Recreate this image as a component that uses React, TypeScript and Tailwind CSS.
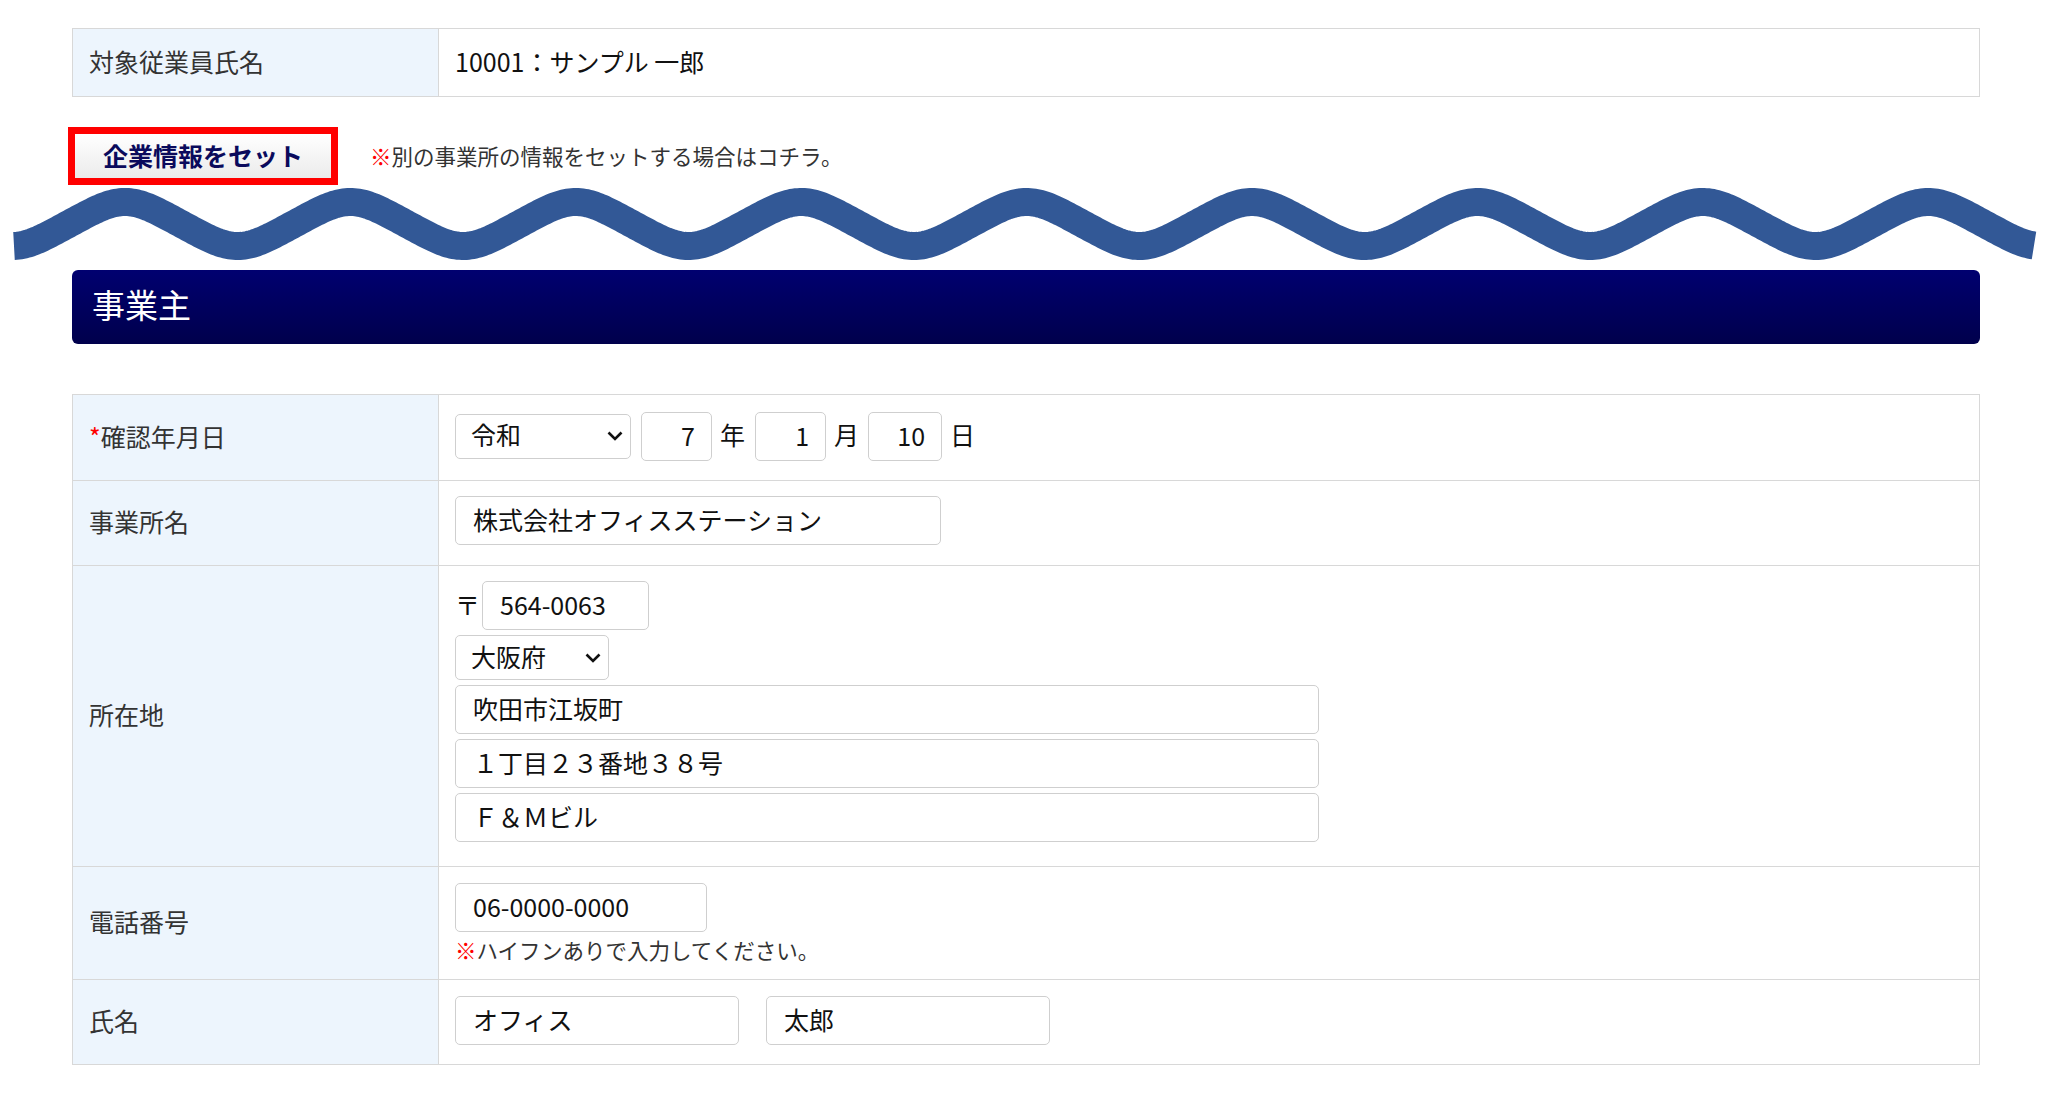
import React from 'react';

// wave divider, page coords shifted so svg top = 185
const WAVE_PATH = (() => {
  const pts: string[] = [];
  for (let x = 14; x <= 2034; x += 2) {
    const t = (2 * Math.PI * (x - 125)) / 225.4;
    const f = (Math.cos(t) + 0.03 * Math.cos(3 * t)) / 1.03;
    const y = 39 - 22 * f;
    pts.push(`${x},${y.toFixed(2)}`);
  }
  return 'M' + pts.join(' L');
})();

const Chevron = () => (
  <svg
    width="16"
    height="10"
    viewBox="0 0 16 10"
    className="pointer-events-none absolute right-[8px] top-1/2 -translate-y-1/2"
  >
    <path d="M1.5 1.5 L8 8 L14.5 1.5" fill="none" stroke="#111" strokeWidth="2.6" />
  </svg>
);

const TextBox = ({ value, className = '', right = false }: { value: string; className?: string; right?: boolean }) => (
  <input
    readOnly
    value={value}
    className={`h-[49px] rounded-[5px] border border-[#cfcfcf] bg-white pb-[3px] text-[25px] leading-none text-[#111] outline-none ${
      right ? 'pr-[16px] text-right' : 'pl-[17px]'
    } ${className}`}
  />
);

const SelectBox = ({ value, className = '' }: { value: string; className?: string }) => (
  <div className={`relative h-[45px] ${className}`}>
    <select
      value={value}
      onChange={() => {}}
      className="h-full w-full appearance-none rounded-[5px] border border-[#cfcfcf] bg-white pb-[3px] pl-[15px] text-[25px] leading-none text-[#111] outline-none"
    >
      <option value={value}>{value}</option>
    </select>
    <Chevron />
  </div>
);

const Row = ({ label, required = false, className, children }: { label: string; required?: boolean; className: string; children: React.ReactNode }) => (
  <div className={`grid grid-cols-[366px_1fr] ${className}`}>
    <div className="flex items-center border-r border-[#d8d8d8] bg-[#edf5fd] pb-[3px] pl-[16px] text-[25px] text-[#333]">
      {required && <span className="text-[#ff0000]">*</span>}
      {label}
    </div>
    <div className="flex items-center pl-[16px]">{children}</div>
  </div>
);

export default function App() {
  return (
    <div className="min-h-[1098px] w-[2052px] bg-white font-['Noto_Sans_CJK_JP','Noto_Sans',sans-serif] leading-[1.3] text-[#111]">
      <div className="pl-[72px] pr-[72px] pt-[28px]">
        <div className="border border-[#d8d8d8]">
          <div className="grid h-[67px] grid-cols-[366px_1fr]">
            <div className="flex items-center border-r border-[#d8d8d8] bg-[#edf5fd] pb-[3px] pl-[16px] text-[25px] text-[#333]">
              対象従業員氏名
            </div>
            <div className="flex items-center pb-[3px] pl-[16px] text-[25px] text-[#111]">10001：サンプル 一郎</div>
          </div>
        </div>

        <div className="mt-[30px] -ml-[4px] flex items-center">
          <button className="flex h-[58px] w-[270px] items-center justify-center border-[7px] border-[#ff0000] bg-gradient-to-b from-white to-[#ebebeb] pb-[2px] text-[25px] font-bold text-[#0a0a5c]">
            企業情報をセット
          </button>
          <p className="ml-[32px] text-[21.5px] text-[#333]">
            <span className="font-bold text-[#ff0000]">※</span>別の事業所の情報をセットする場合はコチラ。
          </p>
        </div>
      </div>

      <svg width="2052" height="85" viewBox="0 0 2052 85" className="block">
        <path d={WAVE_PATH} fill="none" stroke="#325896" strokeWidth="28" />
      </svg>

      <div className="pl-[72px] pr-[72px]">
        <div className="flex h-[74px] items-center rounded-[6px] bg-gradient-to-b from-[#000070] to-[#00004c] pb-[6px] pl-[20px] text-[33px] text-white">
          事業主
        </div>

        <div className="mt-[50px] divide-y divide-[#d8d8d8] border border-[#d8d8d8]">
          <Row label="確認年月日" required className="h-[86px]">
            <div className="flex items-center pb-[3px] text-[25px]">
              <SelectBox value="令和" className="w-[176px]" />
              <TextBox value="7" right className="ml-[10px] h-[48px] w-[71px]" />
              <span className="ml-[8px] pb-[3px]">年</span>
              <TextBox value="1" right className="ml-[10px] h-[48px] w-[71px]" />
              <span className="ml-[8px] pb-[3px]">月</span>
              <TextBox value="10" right className="ml-[9px] h-[48px] w-[74px]" />
              <span className="ml-[8px] pb-[3px]">日</span>
            </div>
          </Row>

          <Row label="事業所名" className="h-[85px]">
            <TextBox value="株式会社オフィスステーション" className="mb-[5px] w-[486px]" />
          </Row>

          <Row label="所在地" className="h-[301px]">
            <div className="flex h-full flex-col gap-[5px] pt-[15px]">
              <div className="flex items-center text-[25px]">
                <span className="w-[27px] pb-[3px]">〒</span>
                <TextBox value="564-0063" className="w-[167px]" />
              </div>
              <SelectBox value="大阪府" className="w-[154px]" />
              <TextBox value="吹田市江坂町" className="w-[864px]" />
              <TextBox value="１丁目２３番地３８号" className="w-[864px]" />
              <TextBox value="Ｆ＆Ｍビル" className="w-[864px]" />
            </div>
          </Row>

          <Row label="電話番号" className="h-[113px]">
            <div className="flex flex-col">
              <TextBox value="06-0000-0000" className="w-[252px]" />
              <p className="mt-[5px] text-[21.5px] leading-[26px] text-[#333]">
                <span className="font-bold text-[#ff0000]">※</span>ハイフンありで入力してください。
              </p>
            </div>
          </Row>

          <Row label="氏名" className="h-[84px]">
            <div className="mb-[4px] flex items-center gap-[27px]">
              <TextBox value="オフィス" className="h-[47px] w-[284px]" />
              <TextBox value="太郎" className="h-[47px] w-[284px]" />
            </div>
          </Row>
        </div>
      </div>
    </div>
  );
}
